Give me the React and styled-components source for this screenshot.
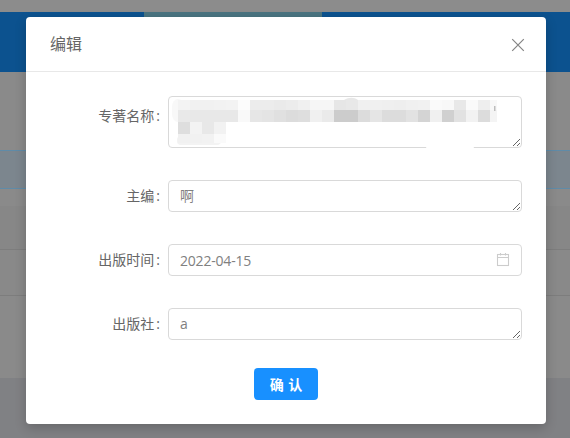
import styled, { createGlobalStyle } from "styled-components";

const GlobalStyle = createGlobalStyle`
  html, body {
    margin: 0;
    padding: 0;
    background: #8a8a8a;
  }
  * {
    box-sizing: border-box;
  }
`;

const mosaicRows = [
  { y: 100, h: 10, from: 0, cells: ["f3", "f1", "f1", "f2", "f3", "fc", "ec", "ec", "ea", "ec", "f0", "f6", "f6", "e6", "e8", "f0", "f0", "ef", "ee", "f0", "f1", "fa", "f8", "e8", "fa", "ee", "f8"] },
  { y: 110, h: 12, from: 0, cells: ["e9", "e8", "e8", "e8", "e8", "f9", "e6", "e4", "e0", "dc", "de", "f0", "ea", "cc", "cc", "dc", "e5", "dc", "dc", "e2", "d4", "f0", "d0", "e2", "f2", "dc", "f4"] },
  { y: 122, h: 12, from: 0, cells: ["de", "f3", "e8", "f2"] },
  { y: 134, h: 9, from: 0, cells: ["f1", "f1", "f2", "fa"] },
];

const Mosaic = () => (
  <MosaicLayer width="354" height="56" viewBox="168 96 354 56">
    <rect x="172" y="99" width="12" height="23" rx="8" fill="#f8f8f8" />
    <rect x="177" y="136" width="44" height="9" rx="4" fill="#f3f3f3" />
    <path d="M344 100 C349 97 354 97 358 100 Z" fill="#e8e8e8" />
    {mosaicRows.map((row) =>
      row.cells.map((gray, i) => (
        <rect
          key={`${row.y}-${i}`}
          x={178 + i * 12}
          y={row.y}
          width={i === 26 ? 7 : 12}
          height={row.h}
          fill={`#${gray}${gray}${gray}`}
        />
      ))
    )}
    <rect x="494" y="106" width="1.5" height="5" fill="#bdbdbd" />
    <ellipse cx="450" cy="147.5" rx="24" ry="3" fill="#ffffff" />
  </MosaicLayer>
);

const CalendarIcon = () => (
  <svg width="14" height="14" viewBox="0 0 14 14" fill="none" stroke="#cccccc" strokeWidth="1.1">
    <rect x="1.5" y="1.5" width="11" height="11" />
    <path d="M1.5 4.5H12.5M4.5 0V2.5M9.5 0V2.5" />
  </svg>
);

const CloseIcon = () => (
  <svg width="14" height="14" viewBox="0 0 14 14" fill="none" stroke="#848484" strokeWidth="1.2">
    <path d="M1.2 1.2L12.8 12.8M12.8 1.2L1.2 12.8" />
  </svg>
);

const App = () => {
  return (
    <Page>
      <GlobalStyle />
      <TopStrip />
      <Nav>
        <NavTab />
        <NavTab $active />
        <NavTab $grow />
      </Nav>
      <TableArea>
        <Band $h={78} />
        <SelectedRow />
        <Band $h={17} />
        <Band $h={45} $tone="#878787" $line />
        <Band $h={46} $tone="#898989" $line />
        <Band $h={82} $tone="#8a8a8a" />
      </TableArea>
      <Footer />

      <Modal>
        <ModalHeader>
          <ModalTitle>编辑</ModalTitle>
          <CloseButton type="button">
            <CloseIcon />
          </CloseButton>
        </ModalHeader>
        <ModalBody>
          <Row>
            <Label $top={4}>专著名称</Label>
            <Field>
              <TextArea $h={52} readOnly value="" />
              <Mosaic />
            </Field>
          </Row>
          <Row>
            <Label>主编</Label>
            <Field>
              <TextArea $h={32} readOnly value="啊" />
            </Field>
          </Row>
          <Row>
            <Label>出版时间</Label>
            <Field>
              <DateBox>
                <DateValue>2022-04-15</DateValue>
                <CalendarIcon />
              </DateBox>
            </Field>
          </Row>
          <Row>
            <Label>出版社</Label>
            <Field>
              <TextArea $h={32} readOnly value="a" />
            </Field>
          </Row>
          <Actions>
            <SubmitButton type="button">确 认</SubmitButton>
          </Actions>
        </ModalBody>
      </Modal>
    </Page>
  );
};

const Page = styled.div`
  position: relative;
  display: flex;
  flex-direction: column;
  width: 570px;
  height: 438px;
  overflow: hidden;
  background: #8a8a8a;
  font-family: "Open Sans", "Noto Sans CJK SC", sans-serif;
`;

const TopStrip = styled.div`
  height: 12px;
  background: #8c8c8c;
`;

const Nav = styled.div`
  display: flex;
  height: 60px;
  background: #0c528f;
`;

const NavTab = styled.div`
  width: ${(props) => (props.$active ? "178px" : "144px")};
  flex: ${(props) => (props.$grow ? 1 : "none")};
  height: ${(props) => (props.$active ? "5px" : "100%")};
  background: ${(props) => (props.$active ? "#4a7480" : "#0c528f")};
`;

const TableArea = styled.div`
  display: flex;
  flex-direction: column;
  height: 306px;
`;

const Band = styled.div`
  height: ${(props) => props.$h}px;
  background: ${(props) => props.$tone || "#8a8a8a"};
  border-bottom: ${(props) => (props.$line ? "1px solid #7d7d7d" : "none")};
`;

const SelectedRow = styled.div`
  height: 39px;
  background: #7c868e;
  border-top: 1px solid #5f8ba8;
  border-bottom: 1px solid #5f8ba8;
`;

const Footer = styled.div`
  flex: 1;
  background: #808184;
`;

const Modal = styled.div`
  position: absolute;
  left: 26px;
  top: 17px;
  width: 520px;
  height: 407px;
  background: #ffffff;
  border-radius: 4px;
  box-shadow: 0 4px 12px rgba(0, 0, 0, 0.2);
`;

const ModalHeader = styled.div`
  display: flex;
  align-items: center;
  justify-content: space-between;
  height: 55px;
  padding: 0 21px 0 24px;
  border-bottom: 1px solid #e8e8e8;
`;

const ModalTitle = styled.div`
  font-size: 16px;
  line-height: 22px;
  color: #666666;
`;

const CloseButton = styled.button`
  display: flex;
  margin-top: 1px;
  padding: 0;
  border: none;
  background: none;
  cursor: pointer;
`;

const ModalBody = styled.div`
  display: flex;
  flex-direction: column;
  gap: 32px;
  padding: 24px 24px 0;
`;

const Row = styled.div`
  display: flex;
  align-items: flex-start;
`;

const Label = styled.label`
  width: 118px;
  padding-top: ${(props) => props.$top || 0}px;
  line-height: 32px;
  font-size: 14px;
  text-align: right;
  color: #666666;

  &::after {
    content: ":";
    margin: 0 8px 0 2px;
  }
`;

const Field = styled.div`
  position: relative;
  display: flex;
  width: 354px;
`;

const TextArea = styled.textarea`
  display: block;
  width: 100%;
  height: ${(props) => props.$h}px;
  padding: 4px 11px;
  border: 1px solid #d9d9d9;
  border-radius: 4px;
  outline: none;
  resize: vertical;
  font-family: inherit;
  font-size: 14px;
  line-height: 22px;
  color: #808080;
  background: #ffffff;
`;

const MosaicLayer = styled.svg`
  position: absolute;
  left: 0;
  top: 0;
  pointer-events: none;
`;

const DateBox = styled.div`
  display: flex;
  align-items: center;
  justify-content: space-between;
  width: 100%;
  height: 32px;
  padding: 0 11px;
  border: 1px solid #d9d9d9;
  border-radius: 4px;
`;

const DateValue = styled.span`
  font-size: 14px;
  letter-spacing: -0.2px;
  color: #808080;
`;

const Actions = styled.div`
  display: flex;
  justify-content: center;
  margin-top: -4px;
`;

const SubmitButton = styled.button`
  width: 64px;
  height: 32px;
  padding: 0;
  border: none;
  border-radius: 4px;
  background: #1890ff;
  color: #ffffff;
  font-family: inherit;
  font-size: 14px;
  font-weight: 600;
  word-spacing: 1px;
  cursor: pointer;
`;

export default App;
